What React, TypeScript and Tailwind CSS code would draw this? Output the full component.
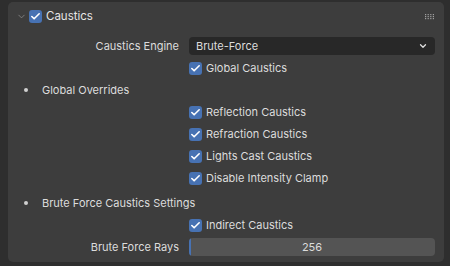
import { Check, ChevronDown } from 'lucide-react';

const overrides = [
  'Reflection Caustics',
  'Refraction Caustics',
  'Lights Cast Caustics',
  'Disable Intensity Clamp',
];

function Box() {
  return (
    <span className="w-[13px] h-[13px] rounded-[3px] bg-[#4772b3] flex items-center justify-center shrink-0">
      <Check className="w-[11px] h-[11px] text-white" strokeWidth={3.5} />
    </span>
  );
}

function CheckRow({ label }: { label: string }) {
  return (
    <div className="h-[22px] flex items-center">
      <div className="w-[171px]" />
      <div className="ml-[10px] flex items-center gap-[4px]">
        <Box />
        <span>{label}</span>
      </div>
    </div>
  );
}

function Bullet({ label }: { label: string }) {
  return (
    <div className="h-[22px] flex items-center">
      <span className="ml-[16px] w-[4px] h-[4px] rounded-full bg-[#d0d0d0]" />
      <span className="ml-[14px]">{label}</span>
    </div>
  );
}

export default function App() {
  return (
    <div
      className="w-[450px] h-[266px] bg-[#2e2e2e] pl-[8px] pr-[6px] pt-[2px] text-[11px] text-[#dcdcdc] overflow-hidden"
      style={{ fontFamily: 'Inter, "Noto Sans", sans-serif' }}
    >
      <div className="h-[260px] rounded-[5px] bg-[#3d3d3d] pr-[9px]">
        {/* Header */}
        <div className="h-[29px] flex items-center">
          <ChevronDown className="ml-[8px] w-[11px] h-[11px] text-[#8c8c8c]" strokeWidth={1.75} />
          <span className="ml-[2px]"><Box /></span>
          <span className="ml-[4px] text-[11.5px] text-[#e6e6e6]">Caustics</span>
          <svg className="ml-auto mr-[1px]" width="9" height="6" viewBox="0 0 9 6">
            {[0, 1, 2, 3].map((c) =>
              [0, 1, 2].map((r) => (
                <rect key={`${c}-${r}`} x={c * 2.6} y={r * 2} width="1.2" height="1.2" fill="#a0a0a0" />
              ))
            )}
          </svg>
        </div>

        {/* Engine */}
        <div className="mt-[6px] h-[18px] flex items-center">
          <span className="w-[171px] text-right">Caustics Engine</span>
          <div className="ml-[10px] flex-1 h-[18px] rounded-[4px] bg-[#282828] flex items-center px-[7px]">
            <span>Brute-Force</span>
            <ChevronDown className="ml-auto w-[10px] h-[10px] text-[#e0e0e0]" strokeWidth={3} />
          </div>
        </div>
        <div className="mt-[2px]" />
        <CheckRow label="Global Caustics" />
        <Bullet label="Global Overrides" />
        {overrides.map((o) => (
          <CheckRow key={o} label={o} />
        ))}
        <div className="mt-[3px]" />
        <Bullet label="Brute Force Caustics Settings" />
        <CheckRow label="Indirect Caustics" />

        {/* Rays slider */}
        <div className="h-[22px] flex items-center">
          <span className="w-[171px] text-right">Brute Force Rays</span>
          <div className="ml-[10px] flex-1 h-[18px] rounded-[4px] bg-[#545454] flex items-center justify-center relative overflow-hidden">
            <span className="absolute left-0 top-0 bottom-0 w-[2px] bg-[#4772b3]" />
            <span>256</span>
          </div>
        </div>
      </div>
    </div>
  );
}
